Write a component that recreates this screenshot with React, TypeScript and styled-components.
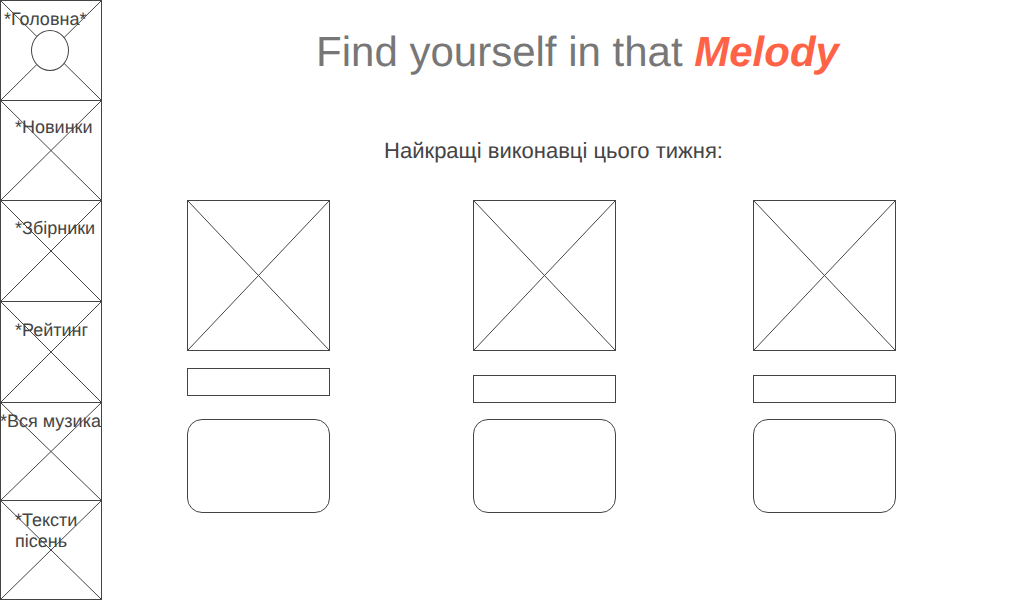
import React from "react";
import styled, { createGlobalStyle } from "styled-components";

const ink = "#444444";

const GlobalStyle = createGlobalStyle`
  *, *::before, *::after { box-sizing: border-box; }
  body {
    margin: 0;
    background: #ffffff;
    color: ${ink};
    font-family: "Liberation Sans", Arial, sans-serif;
    text-rendering: geometricPrecision;
  }
`;

const Page = styled.div`
  display: flex;
  align-items: flex-start;
  min-height: 100vh;
`;

const Sidebar = styled.nav`
  flex: none;
  width: 102px;
`;

const Menu = styled.ul`
  margin: 0;
  padding: 0;
  list-style: none;
  border-bottom: 1px solid ${ink};
`;

const Tile = styled.li<{ $height: number }>`
  position: relative;
  height: ${(p) => p.$height}px;
  border: 1px solid ${ink};
  border-bottom: 0;
`;

const TileLink = styled.a<{ $top: number; $indent: number }>`
  position: relative;
  display: block;
  height: 100%;
  padding-top: ${(p) => p.$top}px;
  margin-left: ${(p) => p.$indent}px;
  color: inherit;
  font-size: 18px;
  line-height: 21px;
  text-decoration: none;
  white-space: pre-line;
`;

const CrossSvg = styled.svg`
  position: absolute;
  inset: 0;
  display: block;
  width: 100%;
  height: 100%;
`;

const Dot = styled.span`
  position: absolute;
  top: 29px;
  left: 30px;
  width: 38px;
  height: 41px;
  border: 1px solid ${ink};
  border-radius: 50%;
  background: #ffffff;
`;

const Main = styled.main`
  flex: 1;
  min-width: 0;
`;

const Title = styled.h1`
  margin: 0;
  padding: 28px 0 0 28px;
  color: #777777;
  font-size: 42px;
  font-weight: 400;
  line-height: 48px;
  text-align: center;
`;

const Accent = styled.em`
  color: #ff6347;
  font-weight: 700;
`;

const Subtitle = styled.h2`
  margin: 62px 0 0;
  padding-right: 20px;
  font-size: 22px;
  font-weight: 400;
  line-height: 26px;
  text-align: center;
`;

const Artists = styled.section`
  display: grid;
  grid-template-columns: 286fr 280fr 272fr;
  margin-top: 36px;
  padding-left: 85px;
`;

const Card = styled.article`
  display: flex;
  flex-direction: column;
  width: 143px;
  height: 313px;
`;

const Photo = styled.div`
  position: relative;
  height: 151px;
  border: 1px solid ${ink};
`;

const NameBar = styled.div<{ $gap: number }>`
  height: 28px;
  margin-top: ${(p) => p.$gap}px;
  border: 1px solid ${ink};
`;

const Panel = styled.div`
  height: 94px;
  margin-top: auto;
  border: 1px solid ${ink};
  border-radius: 15px;
`;

function Cross() {
  return (
    <CrossSvg viewBox="0 0 100 100" preserveAspectRatio="none" aria-hidden="true">
      <path
        d="M0 0L100 100M100 0L0 100"
        fill="none"
        stroke={ink}
        strokeWidth="1"
        vectorEffect="non-scaling-stroke"
      />
    </CrossSvg>
  );
}

const items = [
  { label: "*Головна*", height: 100, top: 8, indent: 3, dot: true },
  { label: "*Новинки", height: 100, top: 16, indent: 14 },
  { label: "*Збірники", height: 101, top: 17, indent: 14 },
  { label: "*Рейтинг", height: 101, top: 18, indent: 14 },
  { label: "*Вся музика", height: 98, top: 8, indent: -1, nowrap: true },
  { label: "*Тексти\nпісень", height: 99, top: 9, indent: 14 },
];

const artists = [
  { id: 1, gap: 17 },
  { id: 2, gap: 24 },
  { id: 3, gap: 24 },
];

export default function App() {
  return (
    <>
      <GlobalStyle />
      <Page>
        <Sidebar>
          <Menu>
            {items.map((item) => (
              <Tile key={item.label} $height={item.height}>
                <Cross />
                {item.dot && <Dot />}
                <TileLink href="#" $top={item.top} $indent={item.indent}>
                  {item.nowrap ? item.label.replace(" ", "\u00a0") : item.label}
                </TileLink>
              </Tile>
            ))}
          </Menu>
        </Sidebar>
        <Main>
          <Title>
            Find yourself in that <Accent>Melody</Accent>
          </Title>
          <Subtitle>Найкращі виконавці цього тижня:</Subtitle>
          <Artists>
            {artists.map((artist) => (
              <Card key={artist.id}>
                <Photo>
                  <Cross />
                </Photo>
                <NameBar $gap={artist.gap} />
                <Panel />
              </Card>
            ))}
          </Artists>
        </Main>
      </Page>
    </>
  );
}
